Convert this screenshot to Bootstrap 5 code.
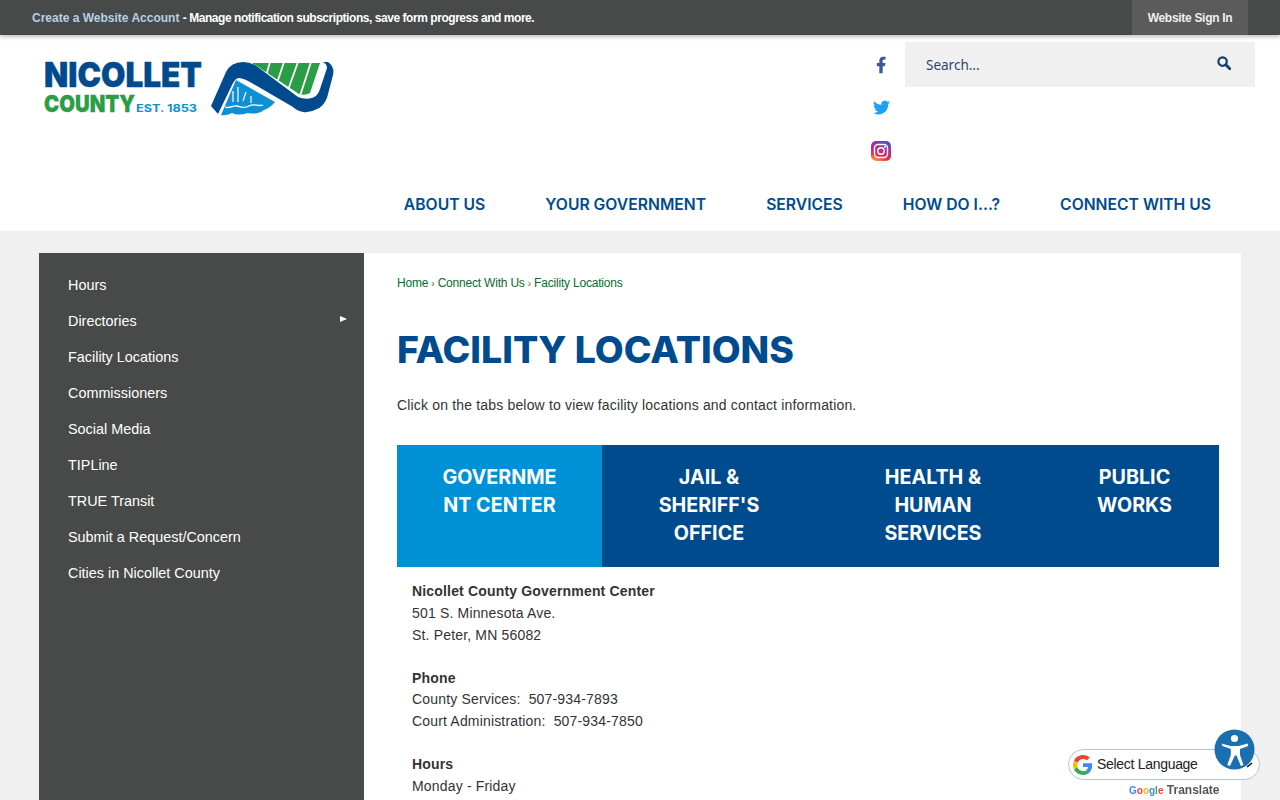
<!DOCTYPE html>
<html lang="en">
<head>
    <meta charset="UTF-8">
    <meta name="viewport" content="width=device-width, initial-scale=1.0">
    <title>Facility Locations | Nicollet County</title>
    <link href="https://cdn.jsdelivr.net/npm/bootstrap@5.3.0/dist/css/bootstrap.min.css" rel="stylesheet">
    <style>
        html, body { height: 800px; overflow: hidden; }
        body { background: #f0f0f0; font-family: "Liberation Sans", Arial, sans-serif; color: #333; font-size: 14px; }
        a { text-decoration: none; }

        .top-strip { height: 35px; background: #474a49; color: #fff; font-size: 12px; font-weight: 700; padding: 0 32px; box-shadow: 0 2px 4px rgba(0,0,0,.25); position: relative; z-index: 2; }
        .top-strip a.acct { color: #b5cfe6; }
        .top-note { letter-spacing: -.45px; }
        .sign-in { color: #eee; height: 35px; width: 116px; background: #5a5b5a; letter-spacing: -.3px; }

        .site-head { height: 196px; background: #fff; padding-right: 25px; }
        .logo-box { padding: 20px 0 0 40px; width: 340px; }
        .soc-col { width: 22px; padding-top: 20px; gap: 24px; margin-right: 13px; }
        .soc-col svg { display: block; }
        .soc-col a:last-child { margin-top: 1px; }
        .search-box { width: 350px; height: 45px; background: #f0f0f0; margin-top: 7px; padding: 0 24px 0 21px; }
        .search-box input { background: transparent; border: 0; padding: 2px 0 0; font-family: "Noto Sans", sans-serif; font-size: 13.5px; box-shadow: none; }
        .search-box input::placeholder { color: #2a4a6b; opacity: 1; }
        .search-box svg { margin-bottom: 4px; }
        .main-nav { gap: 60px; padding: 2px 44px 0 0; height: 54px; }
        .main-nav a { font-family: Inter, "Liberation Sans", sans-serif; font-weight: 600; font-size: 15.7px; color: #004b8d; text-transform: uppercase; }

        .page-wrap { margin: 22px 39px 0; }
        .side-col { width: 325px; background: #474a49; min-height: 600px; padding: 14px 0; flex-shrink: 0; }
        .side-col a { display: block; height: 36px; line-height: 36px; padding-left: 29px; color: #fff; font-size: 14.4px; position: relative; }
        .side-arrow { position: absolute; right: 17px; top: 13px; width: 0; height: 0; border-left: 7px solid #fff; border-top: 3.5px solid transparent; border-bottom: 3.5px solid transparent; }

        .main-col { width: 877px; background: #fff; padding: 21px 22px 0 33px; min-height: 600px; }
        .crumbs { font-size: 12px; color: #555; line-height: 18px; letter-spacing: -.2px; }
        .crumbs a { color: #0a6b2e; }
        .crumb-sep { font-size: 10px; }
        .page-title { font-family: Inter, "Liberation Sans", sans-serif; font-weight: 800; font-size: 37.4px; color: #004b8d; margin: 34px 0 0; line-height: 46px; text-transform: uppercase; }
        .intro { margin: 21px 0 0; line-height: 22px; letter-spacing: .17px; }

        .tab-row { margin-top: 29px; background: #004b8d; height: 122px; display: grid; grid-template-columns: 205px 214px 234px 169px; }
        .tab-item { font-family: Inter, "Liberation Sans", sans-serif; font-weight: 700; font-size: 19.7px; line-height: 28px; color: #fff; text-align: center; padding-top: 18px; text-transform: uppercase; }
        .tab-item.on { background: #0090d6; }

        .tab-body { padding: 13px 15px; line-height: 22px; letter-spacing: .17px; }
        .tab-body p { margin: 0 0 21px; }
        .tab-body strong.short-line { display: block; height: 21px; }

        .translate-box { position: fixed; left: 1068px; top: 749px; width: 192px; height: 31px; background: #fff; border: 1px solid #b5c4d2; border-radius: 16px; font-size: 14px; color: #222; padding-left: 4px; z-index: 5; letter-spacing: -.3px; }
        .translate-arrow { position: absolute; right: 5px; top: 12px; }
        .translate-tag { position: fixed; left: 1129px; top: 783px; font-size: 12px; font-weight: 700; color: #555; z-index: 5; line-height: 14px; }
        .g-word { font-size: 10px; }
        .g-b { color: #4285f4; } .g-r { color: #ea4335; } .g-y { color: #fbbc05; } .g-g { color: #34a853; }
        .acc-btn { position: fixed; left: 1214px; top: 729px; z-index: 6; }
    </style>
</head>
<body>
    <div class="top-strip d-flex justify-content-between align-items-center">
        <div><a class="acct" href="#">Create a Website Account</a> <span class="top-note">- Manage notification subscriptions, save form progress and more.</span></div>
        <a class="sign-in d-flex align-items-center justify-content-center" href="#">Website Sign In</a>
    </div>

    <header class="site-head d-flex flex-column">
        <div class="d-flex flex-grow-1">
            <a class="logo-box" href="#">
                <svg width="296" height="64" viewBox="40 55 296 64">
                    <text x="44" y="87" font-family="Inter, sans-serif" font-weight="900" font-size="34" fill="#004b8d" stroke="#004b8d" stroke-width=".4" textLength="158" lengthAdjust="spacingAndGlyphs">NICOLLET</text>
                    <text x="44" y="112" font-family="Inter, sans-serif" font-weight="900" font-size="23.500" fill="#2a9d46" stroke="#2a9d46" stroke-width=".3" textLength="91" lengthAdjust="spacingAndGlyphs">COUNTY</text>
                    <text x="136" y="112" font-family="Inter, sans-serif" font-weight="700" font-size="11" fill="#0f90d5" textLength="61" lengthAdjust="spacingAndGlyphs">EST. 1853</text>
                    <path d="M252 63H320L310 93Q305 96 299 94Z" fill="#2a9d46"/>
                    <path d="M270 62L266 76M284 62L277 83M298 62L288 90M311 62L300 96" stroke="#fff" stroke-width="1.800" fill="none"/>
                    <path d="M236 80L275 102Q270 108 264 110Q258 115 248 113Q238 116 232 113Q226 116 221 115Z" fill="#0f90d5"/>
                    <path d="M211 106L226 72Q231 62 243 62Q249 62 255 65L298 97Q305 100 312 98Q318 96 320 89L327 68Q327 64 323 62L328 62Q335 67 333 75L327 98Q323 107 317 109Q310 113 303 112Q297 111 293 107L250 82Q243 78 238 78Q235 79 233 83L218 114Z" fill="#004b8d"/>
                    <path d="M233 91v11M238 87v15M246 92l-3 9M251 96v7" stroke="#fff" stroke-width="1.200" fill="none"/>
                    <path d="M225 107c5 2 8-2 12-1s7 3 12 0 9 1 14-1" stroke="#fff" stroke-width="1.300" fill="none"/>
                </svg>
            </a>
            <div class="ms-auto d-flex">
                <div class="soc-col d-flex flex-column align-items-center">
                    <a href="#"><svg width="20" height="20" viewBox="0 0 24 24"><path fill="#3b5998" d="M14 13.5h2.5l1-4H14v-2c0-1.03 0-2 2-2h1.5V2.14c-.326-.043-1.557-.14-2.857-.14C11.928 2 10 3.657 10 6.7v2.8H7v4h3V22h4v-8.5z"/></svg></a>
                    <a href="#"><svg width="17" height="17" viewBox="0 0 24 24"><path fill="#1da1f2" d="M23.953 4.57a10 10 0 01-2.825.775 4.958 4.958 0 002.163-2.723c-.951.555-2.005.959-3.127 1.184a4.92 4.92 0 00-8.384 4.482C7.69 8.095 4.067 6.13 1.64 3.162a4.822 4.822 0 00-.666 2.475c0 1.71.87 3.213 2.188 4.096a4.904 4.904 0 01-2.228-.616v.06a4.923 4.923 0 003.946 4.827 4.996 4.996 0 01-2.212.085 4.936 4.936 0 004.604 3.417 9.867 9.867 0 01-6.102 2.105c-.39 0-.779-.023-1.17-.067a13.995 13.995 0 007.557 2.209c9.053 0 13.998-7.496 13.998-13.985 0-.21 0-.42-.015-.63A9.935 9.935 0 0024 4.59z"/></svg></a>
                    <a href="#"><svg width="20" height="20" viewBox="0 0 20 20">
                        <defs><linearGradient id="ig" x1="0" y1="1" x2="0.4" y2="0"><stop offset="0" stop-color="#fdc04f"/><stop offset=".35" stop-color="#e8303f"/><stop offset=".7" stop-color="#b02a92"/><stop offset="1" stop-color="#5b4fb5"/></linearGradient></defs>
                        <rect width="20" height="20" rx="5" fill="url(#ig)"/>
                        <rect x="3.500" y="3.500" width="13" height="13" rx="3.500" fill="none" stroke="#fff" stroke-width="1.400"/>
                        <circle cx="10" cy="10" r="3.200" fill="none" stroke="#fff" stroke-width="1.400"/>
                        <circle cx="14" cy="6" r=".9" fill="#fff"/>
                    </svg></a>
                </div>
                <div class="search-box d-flex align-items-center">
                    <input class="form-control" type="text" placeholder="Search...">
                    <svg width="14" height="14" viewBox="0 0 14 14" class="flex-shrink-0"><circle cx="5.600" cy="5.600" r="4.200" fill="none" stroke="#123f6d" stroke-width="2.200"/><path d="M8.800 8.800l4 4" stroke="#123f6d" stroke-width="2.800" stroke-linecap="round"/></svg>
                </div>
            </div>
        </div>
        <nav class="main-nav d-flex justify-content-end align-items-center">
            <a href="#">About Us</a>
            <a href="#">Your Government</a>
            <a href="#">Services</a>
            <a href="#">How Do I...?</a>
            <a href="#">Connect With Us</a>
        </nav>
    </header>

    <div class="page-wrap d-flex">
        <aside class="side-col">
            <a href="#">Hours</a>
            <a href="#">Directories<span class="side-arrow"></span></a>
            <a href="#">Facility Locations</a>
            <a href="#">Commissioners</a>
            <a href="#">Social Media</a>
            <a href="#">TIPLine</a>
            <a href="#">TRUE Transit</a>
            <a href="#">Submit a Request/Concern</a>
            <a href="#">Cities in Nicollet County</a>
        </aside>
        <main class="main-col">
            <div class="crumbs"><a href="#">Home</a> <span class="crumb-sep">›</span> <a href="#">Connect With Us</a> <span class="crumb-sep">›</span> <a href="#">Facility Locations</a></div>
            <h1 class="page-title">Facility Locations</h1>
            <p class="intro">Click on the tabs below to view facility locations and contact information.</p>
            <div class="tab-row">
                <div class="tab-item on">Governme<br>nt Center</div>
                <div class="tab-item">Jail &amp;<br>Sheriff's<br>Office</div>
                <div class="tab-item">Health &amp;<br>Human<br>Services</div>
                <div class="tab-item">Public<br>Works</div>
            </div>
            <div class="tab-body">
                <p><strong>Nicollet County Government Center</strong><br>501 S. Minnesota Ave.<br>St. Peter, MN 56082</p>
                <p><strong class="short-line">Phone</strong>County Services:&nbsp; 507-934-7893<br>Court Administration:&nbsp; 507-934-7850</p>
                <p><strong>Hours</strong><br>Monday - Friday</p>
            </div>
        </main>
    </div>

    <div class="translate-box d-flex align-items-center gap-1">
        <svg width="20" height="20" viewBox="0 0 48 48"><path fill="#EA4335" d="M24 9.500c3.500 0 6.700 1.200 9.200 3.600l6.900-6.900C35.900 2.400 30.500 0 24 0 14.600 0 6.500 5.400 2.600 13.200l8 6.200C12.400 13.700 17.700 9.500 24 9.500z"/><path fill="#4285F4" d="M46.100 24.500c0-1.600-.1-3.100-.4-4.500H24v9h12.400c-.5 2.900-2.200 5.300-4.600 7l7.500 5.800c4.300-4 6.800-10 6.800-17.300z"/><path fill="#FBBC05" d="M10.500 28.600c-.5-1.400-.8-3-.8-4.600s.3-3.200.8-4.600l-8-6.200C.9 16.500 0 20.100 0 24s.9 7.500 2.600 10.800l7.900-6.200z"/><path fill="#34A853" d="M24 48c6.500 0 11.900-2.100 15.900-5.800l-7.500-5.800c-2.100 1.400-4.800 2.300-8.400 2.300-6.300 0-11.600-4.200-13.500-9.900l-7.900 6.200C6.500 42.600 14.600 48 24 48z"/></svg>
        <span>Select Language</span>
        <svg class="translate-arrow" width="8" height="6" viewBox="0 0 8 6"><path d="M1 5l5-4" stroke="#111" stroke-width="1.600" fill="none"/></svg>
    </div>
    <div class="translate-tag"><span class="g-word"><span class="g-b">G</span><span class="g-r">o</span><span class="g-y">o</span><span class="g-b">g</span><span class="g-g">l</span><span class="g-r">e</span></span> Translate</div>
    <a class="acc-btn" href="#" aria-label="Accessibility">
        <svg width="41" height="41" viewBox="0 0 41 41" class="d-block"><circle cx="20.500" cy="20.500" r="20" fill="#1a6fb0"/><circle cx="20.500" cy="9.500" r="3.600" fill="#fff"/><path d="M7.500 14.500l9 2.500h8l9-2.500 .8 2.400-8.300 3v6l3.500 10-2.600 1-4.400-10.500h-1.600L15.900 37l-2.600-1 3.500-10v-6l-8.300-3z" fill="#fff"/></svg>
    </a>
</body>
</html>
